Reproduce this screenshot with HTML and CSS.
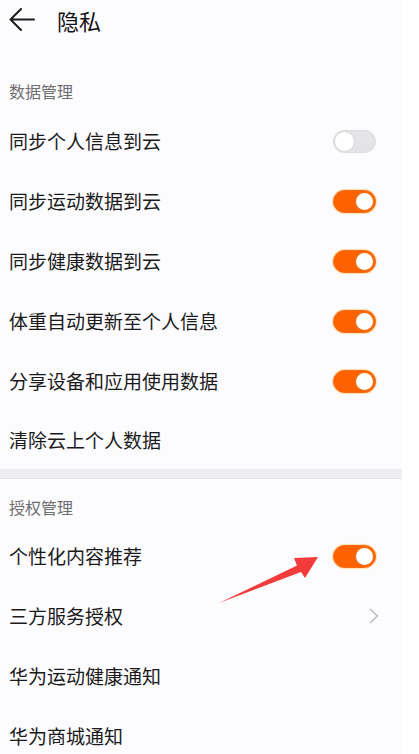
FILE: index.html
```html
<!DOCTYPE html>
<html lang="zh-CN">
<head>
  <meta charset="UTF-8" />
  <title>隐私</title>
  <link rel="stylesheet" href="styles.css">
</head>
<body>
  <div class="page">
    <div class="top-bar">
      <svg class="back-icon" width="26" height="24" viewBox="0 0 26 24">
        <path d="M1.5 11.5 H25 M12 1 L1.5 11.5 L12 22" fill="none" stroke="#1c1c1c" stroke-width="2" stroke-linecap="round" stroke-linejoin="round"/>
      </svg>
      <span class="title">隐私</span>
    </div>

    <div class="section-title first">数据管理</div>
    <div class="row"><span>同步个人信息到云</span><span class="switch"></span></div>
    <div class="row"><span>同步运动数据到云</span><span class="switch on"></span></div>
    <div class="row"><span>同步健康数据到云</span><span class="switch on"></span></div>
    <div class="row"><span>体重自动更新至个人信息</span><span class="switch on"></span></div>
    <div class="row"><span>分享设备和应用使用数据</span><span class="switch on"></span></div>
    <div class="row last"><span>清除云上个人数据</span></div>

    <div class="divider"></div>

    <div class="section-title">授权管理</div>
    <div class="row"><span>个性化内容推荐</span><span class="switch on"></span></div>
    <div class="row">
      <span>三方服务授权</span>
      <svg class="chevron" width="10" height="16" viewBox="0 0 10 16">
        <path d="M1.5 1.5 L8.5 8 L1.5 14.5" fill="none" stroke="#b8b8bc" stroke-width="1.5" stroke-linecap="round" stroke-linejoin="round"/>
      </svg>
    </div>
    <div class="row"><span>华为运动健康通知</span></div>
    <div class="row"><span>华为商城通知</span></div>

    <svg class="pointer" width="402" height="754" viewBox="0 0 402 754">
      <polygon points="219,603 297,565.5 294,558 318,557 305,578 301,572" fill="#f23b3b"/>
    </svg>
  </div>
</body>
</html>
```

FILE: styles.css
```css
html, body {
  margin: 0;
  padding: 0;
  background-color: #fff;
}

body {
  font-family: "Noto Sans CJK SC", "Noto Sans", sans-serif;
  color: #1a1a1a;
}

.page {
  position: relative;
  width: 402px;
  height: 754px;
  overflow: hidden;
  background-color: #fcfbfe;
}

.top-bar {
  display: flex;
  align-items: center;
  height: 42px;
  padding-left: 9px;
}

.back-icon {
  display: block;
  margin-top: -2px;
}

.title {
  margin-left: 22px;
  font-size: 22px;
  line-height: 30px;
  color: #111;
  margin-top: -2px;
}

.section-title {
  padding: 17px 9px 8px;
  font-size: 16px;
  line-height: 22px;
  color: #6e6e70;
}

.section-title.first {
  padding-top: 38px;
  padding-bottom: 9px;
}

.row {
  display: flex;
  align-items: center;
  justify-content: space-between;
  height: 60px;
  padding: 0 26px 0 9px;
  font-size: 19px;
  line-height: 26px;
}

.row.last {
  height: 58px;
}

.switch {
  position: relative;
  box-sizing: border-box;
  width: 43px;
  height: 23px;
  border-radius: 12px;
  background-color: #e4e4e7;
  border: 1px solid #dcdcdf;
}

.switch::after {
  content: "";
  position: absolute;
  top: 0;
  left: 0;
  box-sizing: border-box;
  width: 21px;
  height: 21px;
  border-radius: 50%;
  background-color: #fff;
  border: 1.5px solid #d6d6da;
}

.switch.on {
  background-color: #fd6100;
  border-color: #f76a12;
  box-shadow: 0 0 1px 1px #ffe0b0;
}

.switch.on::after {
  left: auto;
  right: 0;
  border: 2px solid #f46a0c;
}

.chevron {
  display: block;
  margin-right: -3px;
}

.divider {
  height: 9px;
  background-color: #efeef1;
  border-bottom: 1px solid #e4e3e7;
}

.pointer {
  position: absolute;
  top: 0;
  left: 0;
  pointer-events: none;
}
```
